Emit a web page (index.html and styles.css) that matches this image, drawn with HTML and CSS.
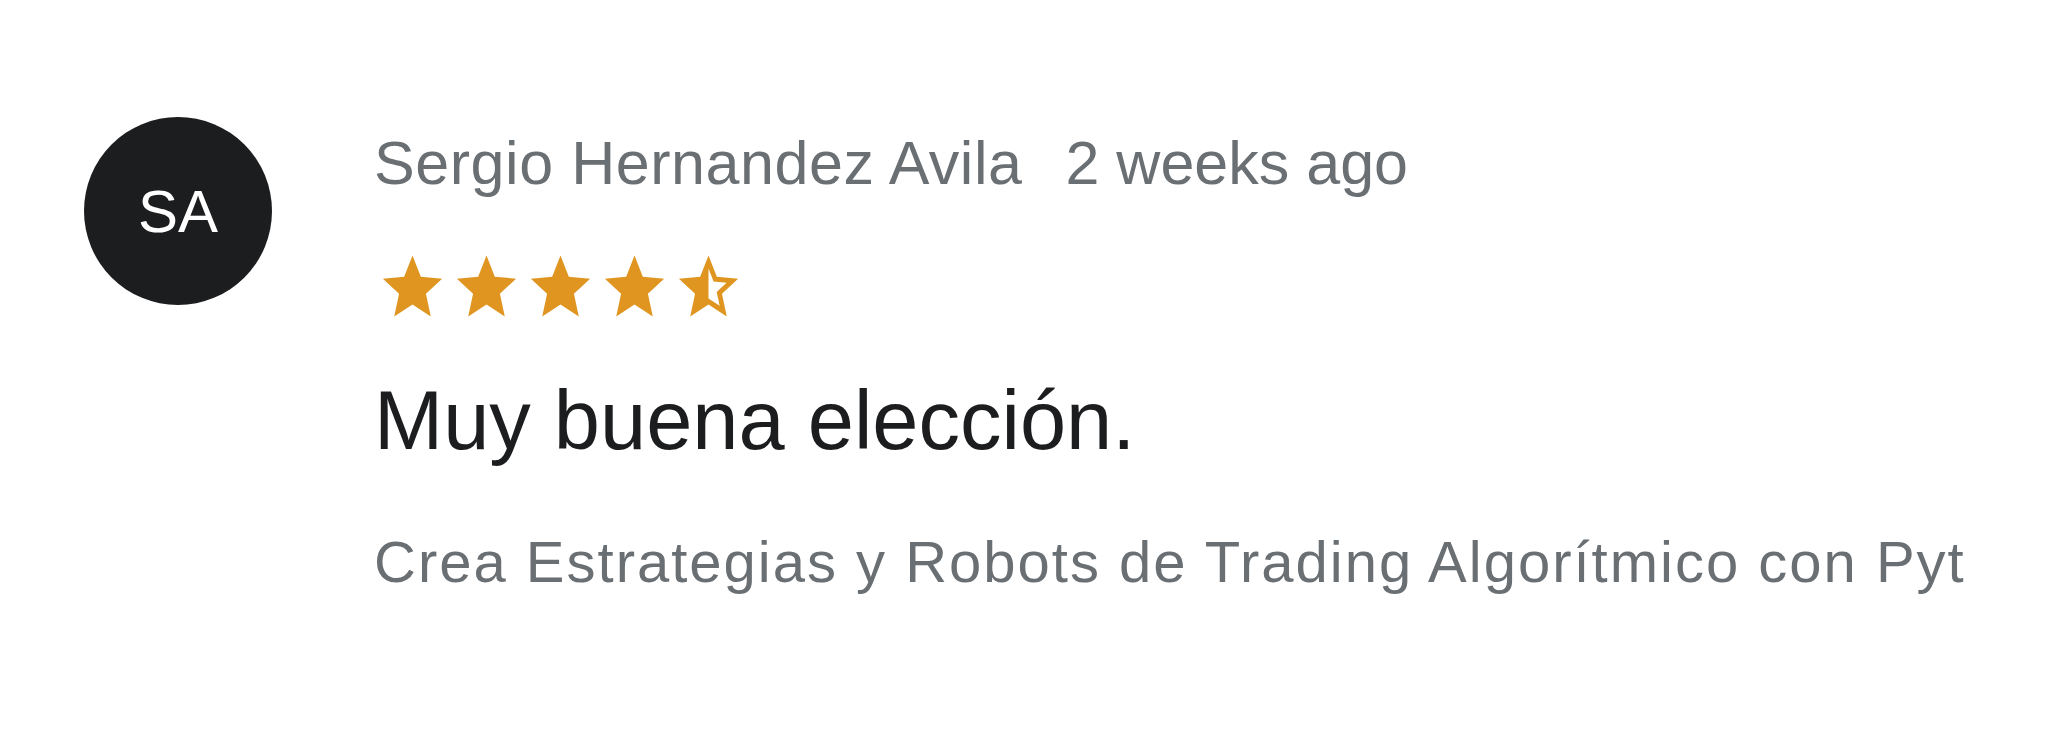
FILE: index.html
```html
<!DOCTYPE html>
<html lang="es">
<head>
    <meta charset="UTF-8">
    <meta name="viewport" content="width=device-width, initial-scale=1.0">
    <title>Review</title>
    <link rel="stylesheet" href="styles.css">
</head>
<body>
    <div class="review">
        <div class="avatar">SA</div>

        <div class="review-body">
            <div class="review-meta">
                <span class="reviewer">Sergio Hernandez Avila</span>
                <span class="review-date">2 weeks ago</span>
            </div>

            <div class="stars">
                <svg viewBox="0 0 24 24" preserveAspectRatio="none"><path d="M12 17.27L18.18 21l-1.64-7.03L22 9.24l-7.19-.61L12 2 9.19 8.63 2 9.24l5.46 4.73L5.82 21z"/></svg>
                <svg viewBox="0 0 24 24" preserveAspectRatio="none"><path d="M12 17.27L18.18 21l-1.64-7.03L22 9.24l-7.19-.61L12 2 9.19 8.63 2 9.24l5.46 4.73L5.82 21z"/></svg>
                <svg viewBox="0 0 24 24" preserveAspectRatio="none"><path d="M12 17.27L18.18 21l-1.64-7.03L22 9.24l-7.19-.61L12 2 9.19 8.63 2 9.24l5.46 4.73L5.82 21z"/></svg>
                <svg viewBox="0 0 24 24" preserveAspectRatio="none"><path d="M12 17.27L18.18 21l-1.64-7.03L22 9.24l-7.19-.61L12 2 9.19 8.63 2 9.24l5.46 4.73L5.82 21z"/></svg>
                <svg viewBox="0 0 24 24" preserveAspectRatio="none"><path d="M22 9.24l-7.19-.62L12 2 9.19 8.63 2 9.24l5.46 4.73L5.82 21 12 17.27 18.18 21l-1.63-7.03L22 9.24zM12 15.4V6.1l1.71 4.04 4.38.38-3.32 2.88 1 4.28L12 15.4z"/></svg>
            </div>

            <p class="review-text">Muy buena elección.</p>

            <p class="review-course">Crea Estrategias y Robots de Trading Algorítmico con Python</p>
        </div>
    </div>
</body>
</html>
```

FILE: styles.css
```css
* {
    margin: 0;
    padding: 0;
    box-sizing: border-box;
    font-family: 'Liberation Sans', Arial, sans-serif;
}

body {
    background-color: #ffffff;
}

.review {
    display: flex;
    align-items: flex-start;
    gap: 102px;
    padding: 117px 0 0 84px;
}

.avatar {
    flex-shrink: 0;
    width: 188px;
    height: 188px;
    border-radius: 50%;
    background-color: #1c1d1f;
    color: #ffffff;
    font-size: 60px;
    display: flex;
    align-items: center;
    justify-content: center;
}

.review-body {
    width: 1590px;
    padding-top: 10px;
    overflow: hidden;
}

.review-meta {
    display: flex;
    gap: 43px;
    font-size: 61px;
    line-height: 1.2;
    color: #6a6f73;
}

.reviewer {
    letter-spacing: 0.55px;
}

.stars {
    display: flex;
    gap: 3px;
    margin-top: 49px;
    margin-left: 3px;
}

.stars svg {
    width: 71px;
    height: 77px;
    fill: #df951f;
}

.review-text {
    margin-top: 45px;
    font-size: 83px;
    line-height: 1.2;
    color: #1c1d1f;
}

.review-course {
    margin-top: 56px;
    font-size: 58px;
    line-height: 1.2;
    color: #6a6f73;
    letter-spacing: 2px;
    white-space: nowrap;
    overflow: hidden;
}
```
